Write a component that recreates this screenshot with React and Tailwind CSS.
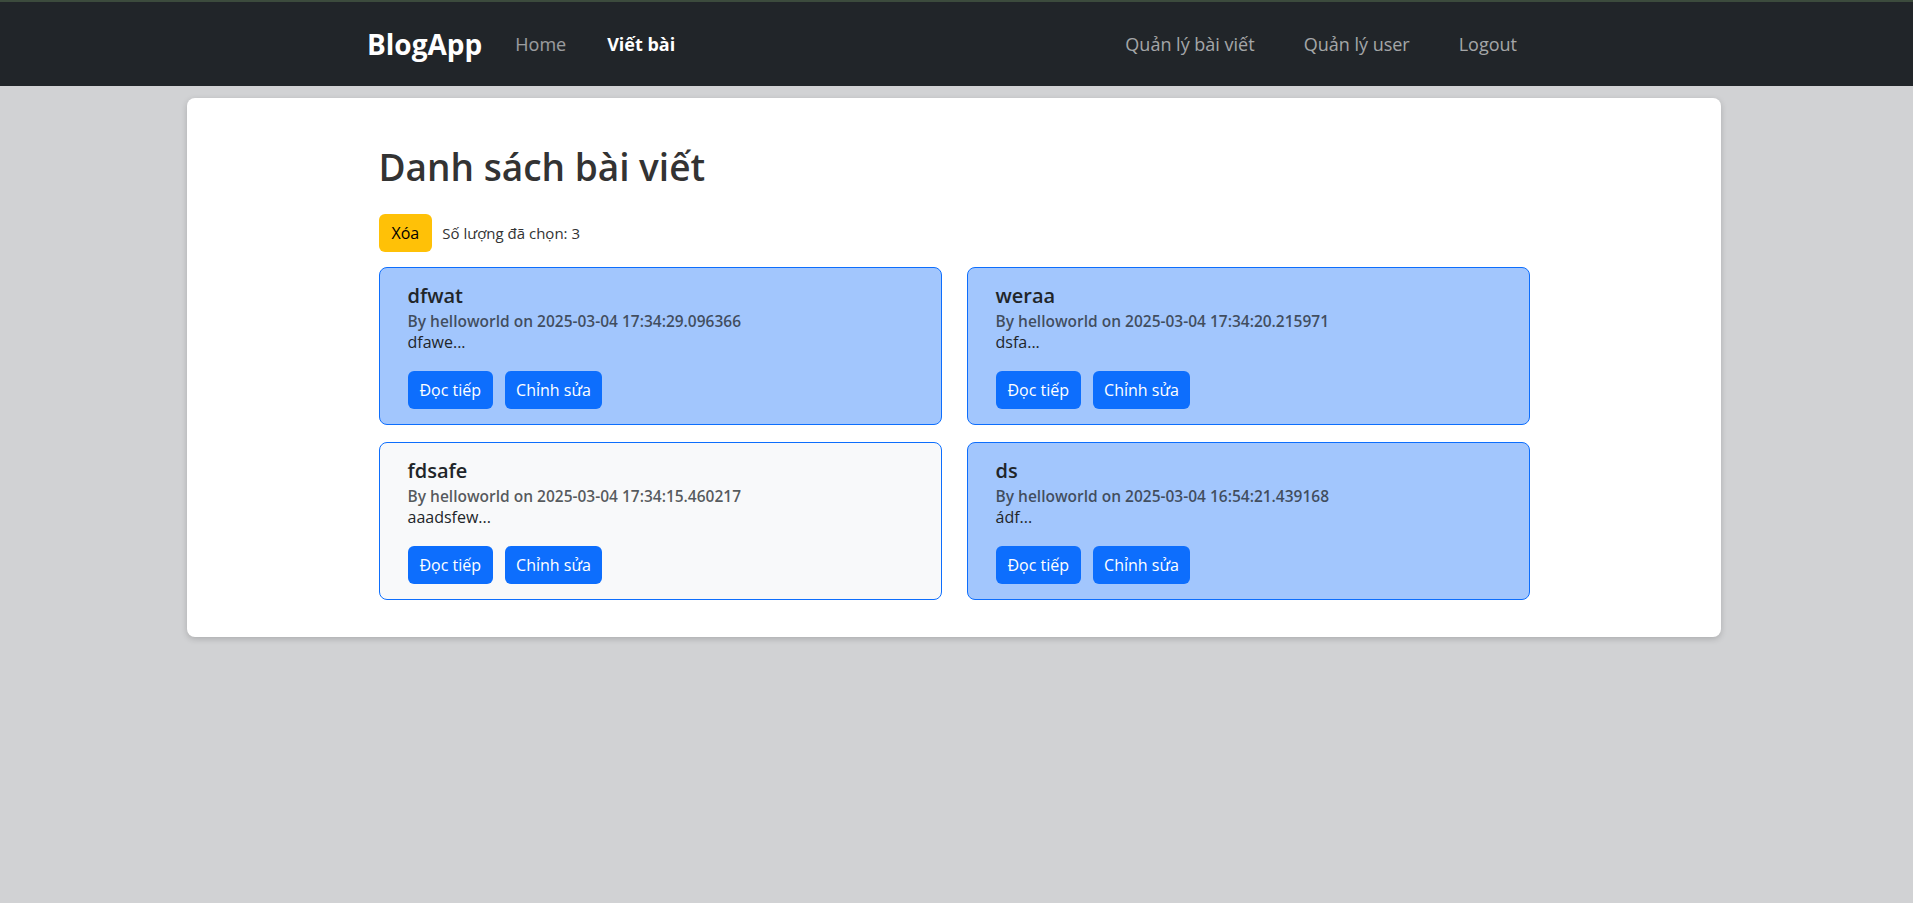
import React from 'react';

const POSTS = [
  { id: 1, title: 'dfwat', date: '2025-03-04 17:34:29.096366', excerpt: 'dfawe...', selected: true },
  { id: 2, title: 'weraa', date: '2025-03-04 17:34:20.215971', excerpt: 'dsfa...', selected: true },
  { id: 3, title: 'fdsafe', date: '2025-03-04 17:34:15.460217', excerpt: 'aaadsfew...', selected: false },
  { id: 4, title: 'ds', date: '2025-03-04 16:54:21.439168', excerpt: 'ádf...', selected: true },
];

const font = { fontFamily: '"Segoe UI", "Open Sans", "Noto Sans", sans-serif' };

function PostCard({ post }) {
  return (
    <div
      className={`rounded-[8px] border border-[#0d6efd] px-[28px] pt-[16px] pb-[15px] ${post.selected ? 'bg-[#a2c6fd]' : 'bg-[#f8f9fa]'}`}>
      <h5 className="text-[20px] leading-[24px] font-semibold text-[#212529]">{post.title}</h5>
      <div className="mt-[3px] text-[15.5px] leading-[21px] font-semibold text-[#212529]/75">
        By helloworld on {post.date}
      </div>
      <p className="text-[16px] leading-[21px] text-[#212529]">{post.excerpt}</p>
      <div className="mt-[18px] flex gap-[12px]">
        <button className="h-[38px] px-[12px] rounded-[6px] bg-[#0d6efd] text-white text-[16px]">Đọc tiếp</button>
        <button className="h-[38px] px-[11px] rounded-[6px] bg-[#0d6efd] text-white text-[16px]">Chỉnh sửa</button>
      </div>
    </div>
  );
}

export default function App() {
  const selectedCount = POSTS.filter(p => p.selected).length;

  return (
    <div className="min-h-screen bg-[#d1d2d4]" style={font}>
      {/* Navbar */}
      <div className="h-[2px] bg-[#3c4b3d]" />
      <nav className="h-[84px] bg-[#212529] flex items-center">
        <div className="ml-[367px] w-[1150px] flex items-center">
          <span className="text-[28px] font-bold text-white leading-none">BlogApp</span>
          <a className="ml-[33px] text-[18px] text-white/55">Home</a>
          <a className="ml-[41px] text-[18px] font-bold text-white">Viết bài</a>
          <div className="ml-auto flex items-center gap-[49px] text-[18px] text-white/60">
            <a>Quản lý bài viết</a>
            <a>Quản lý user</a>
            <a>Logout</a>
          </div>
        </div>
      </nav>

      {/* Panel */}
      <div className="ml-[187px] mt-[12px] w-[1534px] rounded-[8px] bg-white shadow-[0_2px_6px_rgba(0,0,0,0.18)] pt-[45px] pb-[37px]">
        <div className="mx-auto w-[1151px]">
          <h1 className="text-[37px] leading-[47px] font-semibold text-[#333333] mb-[24px]">Danh sách bài viết</h1>
          <div className="flex items-center gap-[10px] mb-[15px]">
            <button className="h-[38px] px-[13px] rounded-[6px] bg-[#ffc107] text-black text-[16px]">Xóa</button>
            <span className="text-[15px] text-[#333333]">Số lượng đã chọn: {selectedCount}</span>
          </div>
          <div className="grid grid-cols-2 gap-x-[25px] gap-y-[17px]">
            {POSTS.map(p => (
              <PostCard key={p.id} post={p} />
            ))}
          </div>
        </div>
      </div>
    </div>
  );
}
